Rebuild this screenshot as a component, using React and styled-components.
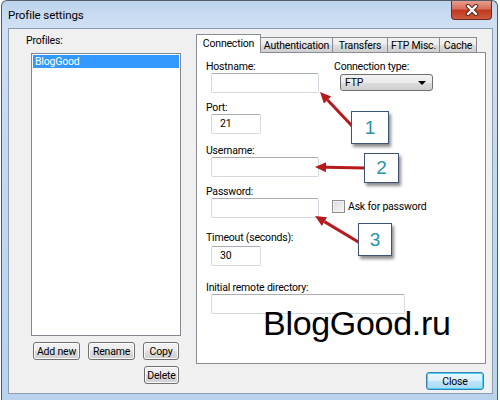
import React from "react";
import styled, { createGlobalStyle } from "styled-components";

const GlobalStyle = createGlobalStyle`
  *, *::before, *::after {
    box-sizing: border-box;
  }
  html, body {
    margin: 0;
    padding: 0;
    background: #ffffff;
  }
  body {
    font-family: Roboto, "Liberation Sans", Arial, sans-serif;
    font-size: 10.5px;
    letter-spacing: -0.2px;
    color: #000;
  }
`;

const Window = styled.div`
  position: relative;
  width: 497px;
  height: 400px;
  margin-left: 1px;
  border: 1px solid #4e5c6c;
  border-bottom: none;
  border-radius: 6px 6px 0 0;
  background: linear-gradient(180deg, #bdd4ec 0%, #cfe0f3 6%, #c3d9f0 40%, #b9d3ee 100%);
  display: flex;
  flex-direction: column;
  overflow: hidden;
`;

const TitleBar = styled.div`
  height: 27px;
  display: flex;
  align-items: flex-start;
  flex-shrink: 0;
`;

const Title = styled.div`
  padding: 7px 0 0 6px;
  font-size: 11.5px;
  line-height: 14px;
  letter-spacing: -0.1px;
  color: #000;
`;

const CloseX = styled.div`
  margin-left: auto;
  margin-right: 5px;
  margin-top: -1px;
  width: 41px;
  height: 20px;
  border: 1px solid #6b2a22;
  border-top: none;
  border-radius: 0 0 4px 4px;
  background: linear-gradient(180deg, #e8a393 0%, #d7705c 45%, #c0391f 55%, #cf5a3c 100%);
  display: flex;
  align-items: center;
  justify-content: center;
`;

const Client = styled.div`
  height: 366px;
  margin: 0 4px 0 6px;
  background: #f0f0f0;
  border: 1px solid #8b9db1;
  display: flex;
`;

const LeftPane = styled.div`
  width: 187px;
  padding: 6px 0 0 17px;
  display: flex;
  flex-direction: column;
  flex-shrink: 0;
`;

const Label = styled.div`
  line-height: 12px;
  height: 12px;
  white-space: nowrap;
  margin-top: ${(p) => p.$top || 0}px;
`;

const ListBox = styled.div`
  margin: 6px 0 0 5px;
  width: 150px;
  height: 283px;
  background: #fff;
  border: 1px solid #828790;
  padding: 1px;
`;

const ListItem = styled.div`
  height: 13px;
  line-height: 13px;
  padding-left: 2px;
  color: ${(p) => (p.$selected ? "#ffffff" : "#000")};
  background: ${(p) => (p.$selected ? "#3399ff" : "transparent")};
`;

const ButtonGrid = styled.div`
  margin: 6px 0 0 7px;
  display: grid;
  grid-template-columns: 47px 47px 36px;
  grid-auto-rows: 18px;
  column-gap: 8px;
  row-gap: 6px;
`;

const Button = styled.button`
  grid-column: ${(p) => p.$col || "auto"};
  width: ${(p) => p.$width || "100%"};
  height: 18px;
  padding: 0;
  font-family: inherit;
  font-size: inherit;
  letter-spacing: inherit;
  color: #000;
  border: 1px solid ${(p) => (p.$default ? "#3c7fb1" : "#707070")};
  border-radius: 3px;
  background: ${(p) =>
    p.$default
      ? "linear-gradient(180deg, #eaf6fd 0%, #d9f0fc 50%, #bee6fd 51%, #a7d9f5 100%)"
      : "linear-gradient(180deg, #f2f2f2 0%, #ebebeb 50%, #dddddd 51%, #cfcfcf 100%)"};
  box-shadow: inset 0 0 0 1px ${(p) => (p.$default ? "#48d4f8" : "#fcfcfc")};
  justify-self: end;
`;

const RightPane = styled.div`
  width: 290px;
  padding-top: 5px;
  display: flex;
  flex-direction: column;
`;

const TabRow = styled.div`
  display: flex;
  align-items: flex-end;
  height: 19px;
  position: relative;
  z-index: 1;
`;

const Tab = styled.div`
  width: ${(p) => p.$width}px;
  height: ${(p) => (p.$active ? 19 : 16)}px;
  line-height: ${(p) => (p.$active ? 17 : 15)}px;
  text-align: center;
  border: 1px solid #898c95;
  border-bottom: ${(p) => (p.$active ? "none" : "1px solid #898c95")};
  border-left: ${(p) => (p.$active ? "1px solid #898c95" : "none")};
  background: ${(p) =>
    p.$active ? "#ffffff" : "linear-gradient(180deg, #f2f2f2 0%, #ebebeb 50%, #dddddd 51%, #cfcfcf 100%)"};
  white-space: nowrap;
`;

const Panel = styled.div`
  height: 312px;
  margin-top: -1px;
  background: #fff;
  border: 1px solid #898c95;
  padding: 8px 9px;
  display: flex;
  flex-direction: column;
`;

const FieldRow = styled.div`
  display: flex;
  align-items: flex-start;
  gap: ${(p) => p.$gap || 0}px;
`;

const Field = styled.div`
  display: flex;
  flex-direction: column;
`;

const Input = styled.div`
  margin: ${(p) => p.$gap || 0}px 0 0 5px;
  width: ${(p) => p.$width}px;
  height: 20px;
  background: #fff;
  border: 1px solid #d5dae2;
  border-top-color: #abadb3;
  border-radius: 2px;
  padding-left: 8px;
  line-height: 18px;
`;

const Select = styled.div`
  margin: 1px 0 0 6px;
  width: 93px;
  height: 17px;
  border: 1px solid #707070;
  border-radius: 3px;
  background: linear-gradient(180deg, #f2f2f2 0%, #ebebeb 50%, #dddddd 51%, #cfcfcf 100%);
  display: flex;
  align-items: center;
  justify-content: space-between;
  padding: 0 6px 0 4px;
`;

const Caret = styled.span`
  width: 0;
  height: 0;
  border-left: 4px solid transparent;
  border-right: 4px solid transparent;
  border-top: 4px solid #000;
`;

const CheckRow = styled.label`
  display: flex;
  align-items: center;
  gap: 3px;
  margin-top: 2px;
`;

const CheckBox = styled.span`
  width: 13px;
  height: 13px;
  border: 1px solid #8e8f8f;
  background: linear-gradient(135deg, #dcdcdc 0%, #f6f6f6 100%);
  box-shadow: inset 0 0 0 1px #f4f4f4;
`;

const Footer = styled.div`
  display: flex;
  justify-content: flex-end;
  margin-top: 8px;
  padding-right: 2px;
`;

const Watermark = styled.div`
  position: absolute;
  left: 261px;
  top: 302px;
  font-family: "Liberation Sans", Arial, sans-serif;
  font-size: 34px;
  line-height: 40px;
  color: #000;
  letter-spacing: -0.3px;
`;

const Callout = styled.div`
  position: absolute;
  left: ${(p) => p.$x}px;
  top: ${(p) => p.$y}px;
  width: ${(p) => p.$w}px;
  height: ${(p) => p.$h}px;
  background: #fff;
  border: 1px solid #3d5377;
  box-shadow: 2px 3px 3px rgba(0, 0, 0, 0.45);
  display: flex;
  align-items: center;
  justify-content: center;
  font-family: "Liberation Sans", Arial, sans-serif;
  font-size: 19px;
  letter-spacing: 0;
  color: #2a93a6;
  z-index: 3;
`;

const ArrowLayer = styled.svg`
  position: absolute;
  left: 0;
  top: 0;
  width: 500px;
  height: 400px;
  pointer-events: none;
  z-index: 2;
`;

// annotation arrows: [tailX, tailY, tipX, tipY]
const arrows = [
  [351, 126, 318, 91],
  [363, 167, 313, 166],
  [358, 242, 313, 215],
];

const Arrow = ({ from, to }) => {
  const [x1, y1] = from;
  const [x2, y2] = to;
  const a = Math.atan2(y2 - y1, x2 - x1);
  const len = 11;
  const wide = 5;
  const bx = x2 - len * Math.cos(a);
  const by = y2 - len * Math.sin(a);
  const px = -Math.sin(a) * wide;
  const py = Math.cos(a) * wide;
  return (
    <g>
      <line x1={x1} y1={y1} x2={bx} y2={by} stroke="#b51a1f" strokeWidth="3" />
      <polygon
        points={`${x2},${y2} ${bx + px},${by + py} ${bx - px},${by - py}`}
        fill="#b51a1f"
      />
    </g>
  );
};

const App = () => {
  return (
    <>
      <GlobalStyle />
      <Window>
        <TitleBar>
          <Title>Profile settings</Title>
          <CloseX>
            <svg width="14" height="12" viewBox="0 0 14 12">
              <path d="M3 2 L11 10 M11 2 L3 10" stroke="#5a2a22" strokeWidth="4.5" strokeLinecap="round" />
              <path d="M3 2 L11 10 M11 2 L3 10" stroke="#ffffff" strokeWidth="2.4" strokeLinecap="round" />
            </svg>
          </CloseX>
        </TitleBar>
        <Client>
          <LeftPane>
            <Label>Profiles:</Label>
            <ListBox>
              <ListItem $selected>BlogGood</ListItem>
            </ListBox>
            <ButtonGrid>
              <Button>Add new</Button>
              <Button>Rename</Button>
              <Button>Copy</Button>
              <Button $col="3" $width="35px">Delete</Button>
            </ButtonGrid>
          </LeftPane>
          <RightPane>
            <TabRow>
              <Tab $width={65} $active>Connection</Tab>
              <Tab $width={72}>Authentication</Tab>
              <Tab $width={55}>Transfers</Tab>
              <Tab $width={52}>FTP Misc.</Tab>
              <Tab $width={37}>Cache</Tab>
            </TabRow>
            <Panel>
              <FieldRow $gap={15}>
                <Field>
                  <Label>Hostname:</Label>
                  <Input $width={108} />
                </Field>
                <Field>
                  <Label>Connection type:</Label>
                  <Select>
                    FTP
                    <Caret />
                  </Select>
                </Field>
              </FieldRow>
              <Label $top={9}>Port:</Label>
              <Input $width={50}>21</Input>
              <Label $top={11}>Username:</Label>
              <Input $width={108} />
              <Label $top={9}>Password:</Label>
              <FieldRow $gap={13}>
                <Input $width={108} />
                <CheckRow>
                  <CheckBox />
                  Ask for password
                </CheckRow>
              </FieldRow>
              <Label $top={14}>Timeout (seconds):</Label>
              <Input $width={50} $gap={2}>30</Input>
              <Label $top={16}>Initial remote directory:</Label>
              <Input $width={194} />
            </Panel>
            <Footer>
              <Button $default $width="58px">Close</Button>
            </Footer>
          </RightPane>
        </Client>
        <Watermark>BlogGood.ru</Watermark>
        <ArrowLayer viewBox="0 0 500 400">
          {arrows.map(([x1, y1, x2, y2], i) => (
            <Arrow key={i} from={[x1, y1]} to={[x2, y2]} />
          ))}
        </ArrowLayer>
        <Callout $x={349} $y={110} $w={38} $h={33}>1</Callout>
        <Callout $x={362} $y={152} $w={35} $h={30}>2</Callout>
        <Callout $x={356} $y={222} $w={34} $h={33}>3</Callout>
      </Window>
    </>
  );
};

export default App;
